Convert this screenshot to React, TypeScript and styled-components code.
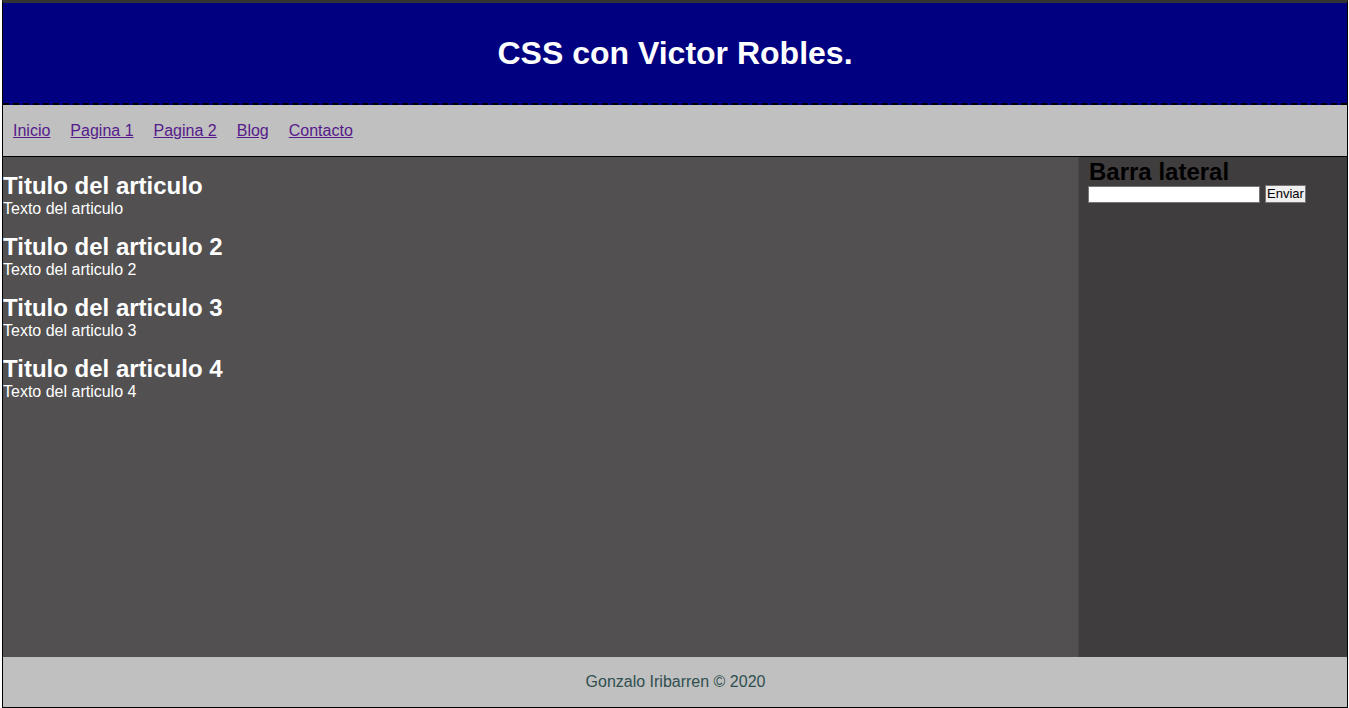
import React from "react";
import styled, { createGlobalStyle } from "styled-components";

const Global = createGlobalStyle`
  html, body { margin: 0; padding: 0; background: #ffffff; }
  body { font-family: "Liberation Sans", Arial, sans-serif; }
`;

const Page = styled.div`
  margin: 0 1px 0 2px;
  border: 1px solid #000;
  border-top: 3px solid #333;
  height: 708px;
  box-sizing: border-box;
  display: flex;
  flex-direction: column;
`;

const Header = styled.header`
  height: 102px;
  background: #000080;
  border-bottom: 2px dashed #000;
  display: flex;
  align-items: center;
  justify-content: center;
  box-sizing: border-box;
`;

const Title = styled.h1`
  margin: 0;
  color: #fff;
  font-size: 32px;
  font-weight: bold;
`;

const Nav = styled.nav`
  height: 52px;
  background: #c0c0c0;
  border-bottom: 1px solid #000;
  box-sizing: border-box;
  display: flex;
  align-items: center;
  padding-left: 10px;
  gap: 20px;
  padding-top: 1px;
`;

const NavLink = styled.a`
  color: #551a8b;
  font-size: 16px;
  text-decoration: underline;
`;

const Main = styled.div`
  height: 500px;
  display: flex;
`;

const Content = styled.section`
  flex: 1;
  background: #525051;
  padding-top: 15px;
  display: flex;
  flex-direction: column;
  gap: 15px;
`;

const Article = styled.article`
  color: #fff;
`;

const ArticleTitle = styled.h2`
  margin: 0;
  font-size: 24px;
  line-height: 28px;
  font-weight: bold;
`;

const ArticleText = styled.p`
  margin: 0;
  font-size: 16px;
  line-height: 18px;
`;

const Sidebar = styled.aside`
  width: 269px;
  background: #403d3e;
  border-left: 1px solid #4a4748;
  box-sizing: border-box;
  padding: 1px 10px 0 10px;
`;

const SideTitle = styled.h3`
  margin: 0;
  font-size: 24px;
  line-height: 27px;
  font-weight: bold;
  color: #000;
`;

const Form = styled.form`
  display: flex;
  align-items: center;
  gap: 5px;
  margin: 0 0 0 -1px;
`;

const Input = styled.input`
  width: 172px;
  height: 17px;
  box-sizing: border-box;
  border: 1px solid #767676;
  background: #fff;
  padding: 0 2px;
`;

const Button = styled.button`
  height: 18px;
  font-family: "Liberation Sans", Arial, sans-serif;
  font-size: 13px;
  padding: 0 1px;
  border: 1px solid #767676;
  background: #efefef;
  color: #000;
  line-height: 14px;
`;

const Footer = styled.footer`
  flex: 1;
  background: #c0c0c0;
  display: flex;
  align-items: center;
  justify-content: center;
  color: #2f4f4f;
  font-size: 16px;
  padding-left: 1px;
`;

const links = ["Inicio", "Pagina 1", "Pagina 2", "Blog", "Contacto"];
const articles = [
  ["Titulo del articulo", "Texto del articulo"],
  ["Titulo del articulo 2", "Texto del articulo 2"],
  ["Titulo del articulo 3", "Texto del articulo 3"],
  ["Titulo del articulo 4", "Texto del articulo 4"],
];

export default function App() {
  return (
    <>
      <Global />
      <Page>
        <Header>
          <Title>CSS con Victor Robles.</Title>
        </Header>
        <Nav>
          {links.map((l) => (
            <NavLink key={l} href="#">
              {l}
            </NavLink>
          ))}
        </Nav>
        <Main>
          <Content>
            {articles.map(([t, x]) => (
              <Article key={t}>
                <ArticleTitle>{t}</ArticleTitle>
                <ArticleText>{x}</ArticleText>
              </Article>
            ))}
          </Content>
          <Sidebar>
            <SideTitle>Barra lateral</SideTitle>
            <Form onSubmit={(e) => e.preventDefault()}>
              <Input type="text" />
              <Button type="submit">Enviar</Button>
            </Form>
          </Sidebar>
        </Main>
        <Footer>Gonzalo Iribarren © 2020</Footer>
      </Page>
    </>
  );
}
